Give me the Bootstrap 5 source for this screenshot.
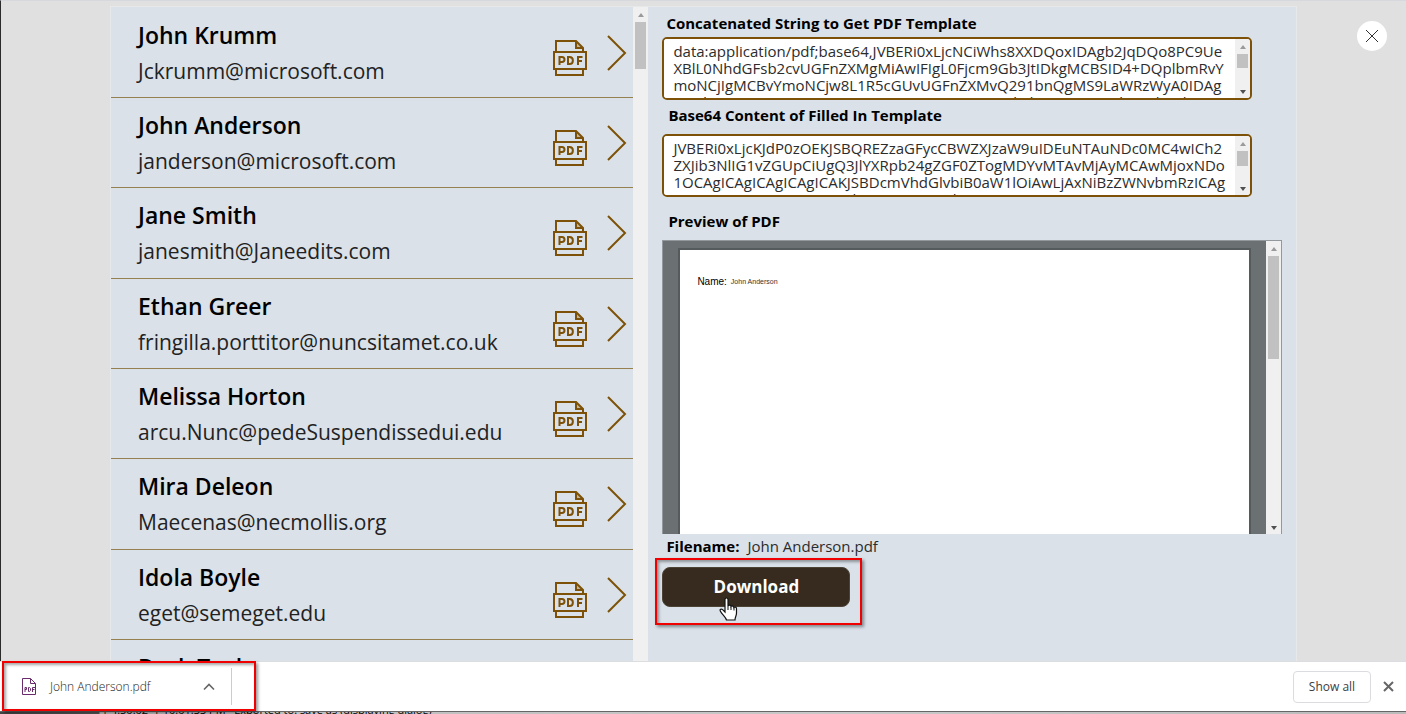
<!DOCTYPE html>
<html lang="en">
<head>
<meta charset="utf-8">
<meta name="viewport" content="width=device-width, initial-scale=1">
<title>PDF templates</title>
<link href="https://cdn.jsdelivr.net/npm/bootstrap@5.3.0/dist/css/bootstrap.min.css" rel="stylesheet">
<style>
:root { --brown: #7d5208; --pane: #dae1e9; --ink: #000; }
body { font-family: "Open Sans", "Noto Sans", sans-serif; color: var(--ink); background: #e0e0e0; }
.stage { border-left: 1px solid #2b2b2b; border-top: 1px solid #d6d8de; padding: 5px 109px 0; min-height: 0; }
.app { background: var(--pane); border: 1px solid #e6e8ea; border-bottom: 0; }
.people { flex: 0 0 calc(44% + 1px); padding-top: 1px; }
.person { height: 90px; padding: 0 6px 0 27px; border: 0; border-bottom: 1px solid #97804f; border-radius: 0; background: transparent; color: var(--ink); }
.person:nth-child(3n) { height: 91px; }
.person-name { font-size: 23px; line-height: 36px; font-weight: 600; }
.person-mail { font-size: 21px; line-height: 36px; font-weight: 400; color: #222; }
.icon-btn { background: none; border: 0; padding: 0; display: block; color: var(--brown); }
.pdf-btn { margin-top: 10px; }
.next-btn { margin-left: 19px; }
.scroller { flex: 0 0 15px; background: #f0f0f0; display: flex; flex-direction: column; align-items: center; }
.scroller i { background: #c1c1c1; display: block; width: 11px; margin-top: 5px; }
.scroller svg { margin-top: 6px; display: block; }
.scroller .down { margin-top: auto; margin-bottom: 4px; }
.details { padding: 7px 14px 0 14px; }
.field-label { font-size: 15px; line-height: 18px; font-weight: 700; padding-left: 6px; margin: 6px 0 10px; display: block; }
.field-label.first { margin: 0 0 5px; padding-left: 4px; }
.field-label.last { margin: 15px 0 10px; }
.code-box { border: 2px solid var(--brown); border-radius: 5px; background: #fff; overflow: hidden; height: 63px; margin-right: 30px; }
.code-box textarea { border: 0; resize: none; overflow: hidden; white-space: pre; outline: 0; padding: 4px 0 0 9px; font-size: 15px; line-height: 17px; color: #2c2c2c; }
.viewer { background: #6b7173; border: 1px solid #92989c; border-bottom: 0; height: 294px; }
.sheet { border: solid #555b5d; border-width: 2px 2px 0; background: #fff; margin: 7px 15px 0; padding: 26px 17px; font-family: "Liberation Sans", sans-serif; line-height: 12px; }
.sheet-key { font-size: 10px; }
.sheet-value { font-size: 7px; color: #333; }
.filename { font-size: 15px; line-height: 24px; padding-left: 4px; margin-bottom: 9px; }
.filename .text-value { color: #2c2c2c; }
.download-btn { background: #362b1e; color: #fff; border: 1px solid #4d4335; border-radius: 8px; width: 188px; height: 40px; font-size: 17px; line-height: 24px; font-weight: 700; padding: 0; }
.callout { position: absolute; border: 2px solid #f00000; box-shadow: 2px 2px 3px rgba(0,0,0,.4), inset 2px 2px 3px rgba(0,0,0,.35); pointer-events: none; }
.download-wrap .callout { inset: -9px -12px -18px -7px; }
.shelf .callout { inset: -1px auto 0 2px; width: 254px; }
.pointer { position: absolute; left: 57px; top: 30px; }
.close-btn { position: absolute; top: 20px; right: 19px; width: 30px; height: 30px; background: #fff; border: 0; border-radius: 50%; padding: 0; }
.shelf { height: 50px; background: #fff; border-top: 1px solid #dcdde0; font-size: 12px; }
.file-link { color: #222; text-decoration: none; font-weight: 300; margin-left: 13px; }
.shelf-item { padding-left: 22px; width: 232px; border-right: 1px solid #ccc; height: 37px; }
.show-btn { width: 78px; height: 32px; background: #fff; border: 1px solid #dadce0; border-radius: 4px; color: #3c4043; font-weight: 500; padding: 0; }
.beneath { height: 3px; border-top: 1px solid #666; overflow: hidden; background: linear-gradient(90deg, #444 0, #555 99px, #bbb 100px, #c8c8c8 60%, #bbb); }
.beneath-log { font-size: 11px; line-height: 14px; margin-top: -9px; padding-left: 102px; white-space: pre; }
</style>
</head>
<body class="vh-100 d-flex flex-column overflow-hidden">

<svg class="d-none">
  <symbol id="pdf" viewBox="0 0 36 38">
    <g fill="none" stroke="currentColor" stroke-width="2">
      <path d="M4 13V2h20l7 7v4M4 30v6h27v-6"/>
      <path d="M2 13h32v17H2z"/>
      <path d="M24 2v7h7" fill="currentColor" fill-opacity=".3"/>
      <path d="M7.500 26v-8h2.500a2.500 2.500 0 0 1 0 5H7.500M16 18h1.500c4.500 0 4.500 7 0 7H16zM26 26v-8h4.500M26 22h4"/>
    </g>
  </symbol>
  <symbol id="next" viewBox="0 0 20 36"><path d="M1 1l17 17L1 35" fill="none" stroke="currentColor" stroke-width="2"/></symbol>
  <symbol id="up" viewBox="0 0 6 4"><path d="M0 4l3-4 3 4z" fill="#9a9a9a"/></symbol>
  <symbol id="dn" viewBox="0 0 6 4"><path d="M0 0l3 4 3-4z" fill="#505050"/></symbol>
</svg>

<main class="stage position-relative flex-fill overflow-hidden d-flex">
  <div class="app d-flex flex-fill overflow-hidden">
    <ul class="people list-group list-group-flush overflow-hidden" id="people"></ul>
    <div class="scroller" aria-hidden="true">
      <svg width="6" height="4"><use href="#up"/></svg>
      <i style="height:47px"></i>
    </div>

    <section class="details flex-fill">
      <label class="field-label first" for="template">Concatenated String to Get PDF Template</label>
      <div class="code-box d-flex">
        <textarea id="template" class="flex-fill" spellcheck="false">data:application/pdf;base64,JVBERi0xLjcNCiWhs8XXDQoxIDAgb2JqDQo8PC9Ue
XBlL0NhdGFsb2cvUGFnZXMgMiAwIFIgL0Fjcm9Gb3JtIDkgMCBSID4+DQplbmRvY
moNCjIgMCBvYmoNCjw8L1R5cGUvUGFnZXMvQ291bnQgMS9LaWRzWyA0IDAg
UiBdPj4NCmVuZG9iag0KMyAwIG9iag0KPDwvRmlsdGVyL0ZsYXRlRGVjb2Rl</textarea>
        <div class="scroller" aria-hidden="true">
          <svg width="6" height="4"><use href="#up"/></svg>
          <i style="height:14px"></i>
          <svg class="down" width="6" height="4"><use href="#dn"/></svg>
        </div>
      </div>

      <label class="field-label" for="content">Base64 Content of Filled In Template</label>
      <div class="code-box d-flex">
        <textarea id="content" class="flex-fill" spellcheck="false">JVBERi0xLjcKJdP0zOEKJSBQREZzaGFycCBWZXJzaW9uIDEuNTAuNDc0MC4wICh2
ZXJib3NlIG1vZGUpCiUgQ3JlYXRpb24gZGF0ZTogMDYvMTAvMjAyMCAwMjoxNDo
1OCAgICAgICAgICAgICAKJSBDcmVhdGlvbiB0aW1lOiAwLjAxNiBzZWNvbmRzICAg
ICAgICAgICAgICAgICAgIAolIFBERiBmaWxlIHNpemU6IDE5</textarea>
        <div class="scroller" aria-hidden="true">
          <svg width="6" height="4"><use href="#up"/></svg>
          <i style="height:15px"></i>
          <svg class="down" width="6" height="4"><use href="#dn"/></svg>
        </div>
      </div>

      <h2 class="field-label last">Preview of PDF</h2>
      <div class="viewer d-flex">
        <div class="sheet flex-fill d-flex align-items-start gap-1">
          <span class="sheet-key">Name:</span>
          <span class="sheet-value">John Anderson</span>
        </div>
        <div class="scroller" aria-hidden="true">
          <svg width="6" height="4"><use href="#up"/></svg>
          <i style="height:103px"></i>
          <svg class="down" width="6" height="4"><use href="#dn"/></svg>
        </div>
      </div>

      <p class="filename d-flex gap-2"><span class="fw-bold">Filename:</span><span class="text-value">John Anderson.pdf</span></p>
      <div class="download-wrap position-relative d-inline-block">
        <button type="button" class="btn download-btn">Download</button>
        <div class="callout"></div>
        <svg class="pointer" width="20" height="25" viewBox="0 0 20 25" aria-hidden="true">
          <path d="M6 2.500C6 .5 9 .5 9 2.500V9c.5-1.300 2.800-1 3 .5.800-1 2.600-.5 2.800 1 .9-.9 2.700-.4 2.700 1.200V16c0 3-1.500 4-1.500 7H7.500C6.500 19.500 3 17.500 1.300 14c-.8-1.700 1-2.600 2.300-1.400L6 15z" fill="#fff" stroke="#111" stroke-width="1.200"/>
          <path d="M9 9v4M12 10v3M15 11v2.500" stroke="#111"/>
        </svg>
      </div>
    </section>
  </div>
  <button type="button" class="close-btn" aria-label="Close"><svg class="d-block mx-auto" width="14" height="14" viewBox="0 0 14 14"><path d="M1 1l12 12M13 1L1 13" stroke="#333" fill="none"/></svg></button>
</main>

<footer class="shelf position-relative flex-shrink-0 d-flex align-items-center justify-content-between">
  <div class="shelf-item d-flex align-items-center">
    <svg width="15" height="17" viewBox="0 0 15 17" fill="none" stroke="#6b2a6b"><path d="M.5 16.500V.5h8l5 5v11zM8.500.5v5h5"/><path d="M3 14V9.500h1.500v2H3M6.500 9.500v4h1l1-1v-2l-1-1zM10.500 14V9.500H13M10.500 11.500h2"/></svg>
    <a class="file-link flex-fill" href="#">John Anderson.pdf</a>
    <button type="button" class="icon-btn me-3" aria-label="Options"><svg class="d-block" width="12" height="8" viewBox="0 0 12 8"><path d="M1 6.500l5-5 5 5" fill="none" stroke="#666" stroke-width="1.600"/></svg></button>
  </div>
  <div class="d-flex align-items-center gap-2 pe-2">
    <button type="button" class="show-btn">Show all</button>
    <button type="button" class="icon-btn p-1" aria-label="Close downloads"><svg class="d-block" width="11" height="11" viewBox="0 0 11 11"><path d="M1 1l9 9M10 1l-9 9" stroke="#666" stroke-width="2"/></svg></button>
  </div>
  <div class="callout"></div>
</footer>
<div class="beneath flex-shrink-0"><div class="beneath-log">| 4:50:02  | 10:01:33 PM   Exported to: save as (displaying dialog)</div></div>

<script src="https://cdn.jsdelivr.net/npm/bootstrap@5.3.0/dist/js/bootstrap.bundle.min.js"></script>
<script>
const people = [
  ["John Krumm", "Jckrumm@microsoft.com"],
  ["John Anderson", "janderson@microsoft.com"],
  ["Jane Smith", "janesmith@Janeedits.com"],
  ["Ethan Greer", "fringilla.porttitor@nuncsitamet.co.uk"],
  ["Melissa Horton", "arcu.Nunc@pedeSuspendissedui.edu"],
  ["Mira Deleon", "Maecenas@necmollis.org"],
  ["Idola Boyle", "eget@semeget.edu"],
  ["Derk Taylor", ""]
];
document.getElementById("people").innerHTML = people.map(([name, mail]) => `
  <li class="person list-group-item flex-shrink-0 d-flex align-items-center">
    <div class="flex-fill"><div class="person-name">${name}</div><div class="person-mail">${mail || "&nbsp;"}</div></div>
    <button type="button" class="icon-btn pdf-btn" aria-label="PDF for ${name}"><svg class="d-block" width="36" height="38"><use href="#pdf"/></svg></button>
    <button type="button" class="icon-btn next-btn" aria-label="Open ${name}"><svg class="d-block" width="20" height="36"><use href="#next"/></svg></button>
  </li>`).join("");
</script>
</body>
</html>
